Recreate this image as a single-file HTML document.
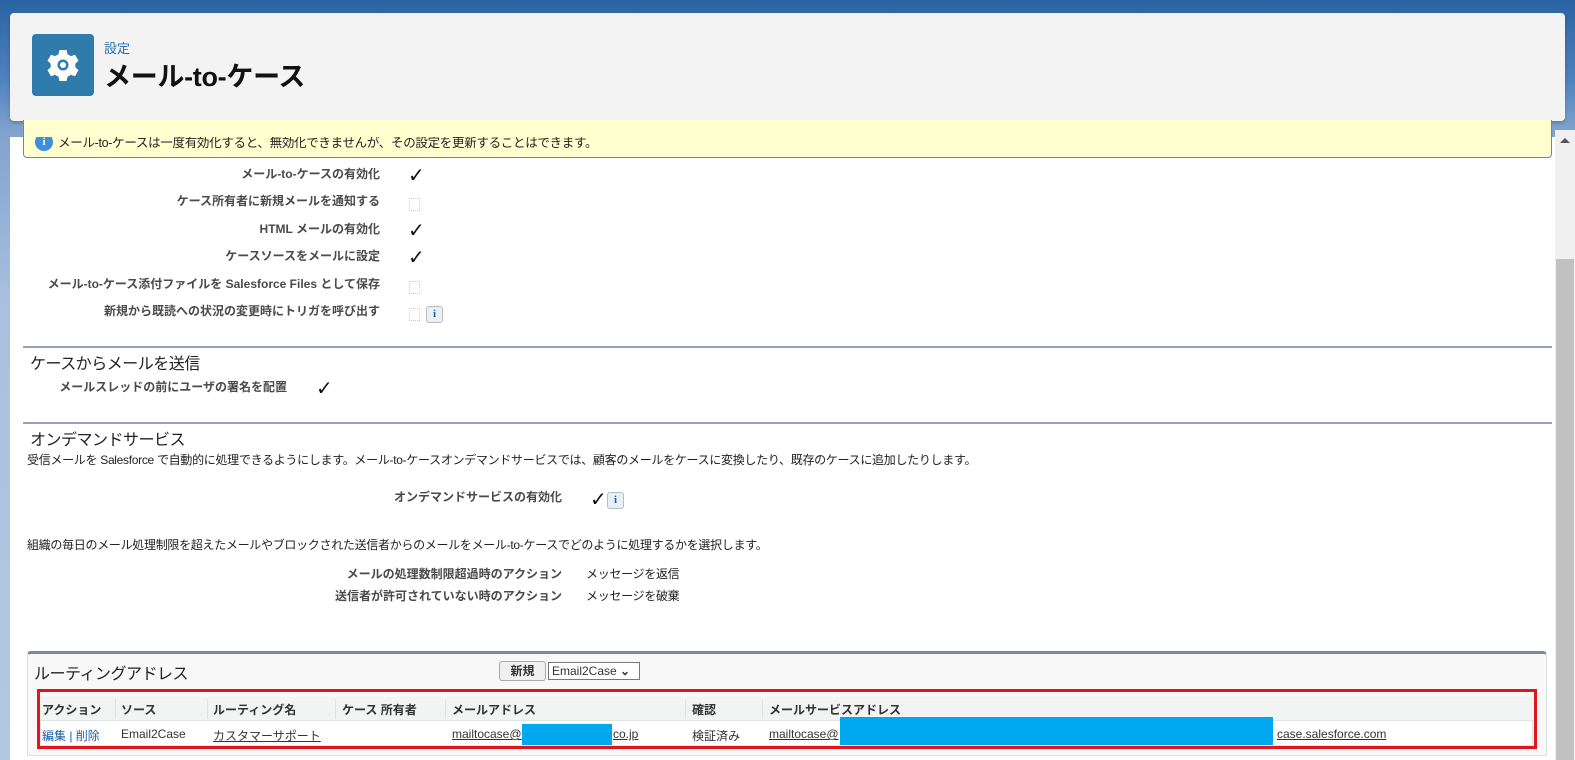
<!DOCTYPE html>
<html><head><meta charset="utf-8"><style>
*{margin:0;padding:0;box-sizing:border-box}
body{width:1575px;height:760px;overflow:hidden;position:relative;font-family:"Liberation Sans","Noto Sans CJK JP",sans-serif;font-size:12px;color:#333;background:linear-gradient(180deg,#2a63a3 0,#4f82be 80px,#7fa2cd 130px,#a9c0de 300px,#b5c8e2 760px)}
.abs{position:absolute}
.hdr{left:10px;top:13px;width:1555px;height:108px;background:#f3f3f3;border-radius:4px;box-shadow:0 2px 3px rgba(0,0,0,.2)}
.icon{left:32px;top:34px;width:62px;height:62px;background:#2f7bac;border-radius:4px}
.panel{left:10px;top:137px;width:1545px;height:623px;background:#fff}
.sb{left:1555px;top:130px;width:20px;height:630px;background:#f0f0f0}
.thumb{left:1556px;top:259px;width:18px;height:501px;background:#c1c1c1}
.info{left:23px;top:120px;width:1529px;height:38px;background:#ffffd0;border:1px solid #3c97d8;border-top:none;border-radius:0 0 4px 4px}
.lbl{font-weight:bold;text-align:right;white-space:nowrap;letter-spacing:0;font-size:12px;color:#4a4a4a}
.cb{width:11px;height:13px;border:1px dotted #ccc}
.chk{font-size:20px;font-weight:bold;color:#111;line-height:1;font-family:"DejaVu Sans",sans-serif}
.ibtn{width:17px;height:17px;border:1px solid #bbb;border-radius:3px;background:#e8f0f8;color:#1f5fb0;font:bold 11px "Liberation Serif",serif;text-align:center;line-height:15px}
.line{left:23px;width:1529px;height:2px;background:#98a2bc}
.h2{font-size:16px;color:#222;letter-spacing:-0.5px;white-space:nowrap}
.txt{white-space:nowrap;letter-spacing:-0.3px;color:#222}
</style></head><body>
<div class="abs hdr"></div>
<div class="abs icon"><svg width="62" height="62" viewBox="0 0 62 62"><g transform="translate(31 31)" fill="#fff"><path d="M-3.5-15h7l1 4.2 3.4 1.9 4.1-1.3 3.5 6-3.2 3v3.4l3.2 3-3.5 6-4.1-1.3-3.4 1.9-1 4.2h-7l-1-4.2-3.4-1.9-4.1 1.3-3.5-6 3.2-3v-3.4l-3.2-3 3.5-6 4.1 1.3 3.4-1.9z"/><circle r="5.5" fill="#2f7bac"/><circle r="3" fill="#fff"/></g></svg></div>
<div class="abs" style="left:104px;top:38px;font-size:13px;color:#2c6fae">設定</div>
<div class="abs" style="left:104px;top:55px;font-size:27px;font-weight:bold;color:#111;letter-spacing:-0.3px">メール-to-ケース</div>
<div class="abs panel"></div>
<div class="abs sb"></div><div class="abs thumb"></div>
<div class="abs" style="left:1560px;top:138px;width:0;height:0;border-left:5px solid transparent;border-right:5px solid transparent;border-bottom:5px solid #555"></div>
<div class="abs info"></div>
<div class="abs" style="left:35px;top:133px;width:18px;height:18px;border-radius:50%;background:#3c8fd8;color:#fff;font:bold 11px serif;text-align:center;line-height:18px;clip-path:inset(4px 0 0 0)">i</div>
<div class="abs txt" style="left:58px;top:132px;font-size:12.5px;clip-path:inset(5px 0 0 0)">メール-to-ケースは一度有効化すると、無効化できませんが、その設定を更新することはできます。</div>

<div class="abs lbl" style="right:1195px;top:165px">メール-to-ケースの有効化</div>
<div class="abs lbl" style="right:1195px;top:192px">ケース所有者に新規メールを通知する</div>
<div class="abs lbl" style="right:1195px;top:220px">HTML メールの有効化</div>
<div class="abs lbl" style="right:1195px;top:247px">ケースソースをメールに設定</div>
<div class="abs lbl" style="right:1195px;top:275px">メール-to-ケース添付ファイルを Salesforce Files として保存</div>
<div class="abs lbl" style="right:1195px;top:302px">新規から既読への状況の変更時にトリガを呼び出す</div>
<div class="abs chk" style="left:408px;top:165px">✓</div>
<div class="abs cb" style="left:409px;top:198px"></div>
<div class="abs chk" style="left:408px;top:220px">✓</div>
<div class="abs chk" style="left:408px;top:247px">✓</div>
<div class="abs cb" style="left:409px;top:281px"></div>
<div class="abs cb" style="left:409px;top:308px"></div>
<div class="abs ibtn" style="left:426px;top:306px">i</div>

<div class="abs line" style="top:346px"></div>
<div class="abs h2" style="left:30px;top:350px">ケースからメールを送信</div>
<div class="abs lbl" style="right:1288px;top:378px">メールスレッドの前にユーザの署名を配置</div>
<div class="abs chk" style="left:316px;top:378px">✓</div>

<div class="abs line" style="top:422px"></div>
<div class="abs h2" style="left:30px;top:426px">オンデマンドサービス</div>
<div class="abs txt" style="left:27px;top:451px">受信メールを Salesforce で自動的に処理できるようにします。メール-to-ケースオンデマンドサービスでは、顧客のメールをケースに変換したり、既存のケースに追加したりします。</div>
<div class="abs lbl" style="right:1013px;top:488px">オンデマンドサービスの有効化</div>
<div class="abs chk" style="left:590px;top:489px">✓</div>
<div class="abs ibtn" style="left:607px;top:492px">i</div>
<div class="abs txt" style="left:27px;top:536px">組織の毎日のメール処理制限を超えたメールやブロックされた送信者からのメールをメール-to-ケースでどのように処理するかを選択します。</div>
<div class="abs lbl" style="right:1013px;top:565px">メールの処理数制限超過時のアクション</div>
<div class="abs lbl" style="right:1013px;top:587px">送信者が許可されていない時のアクション</div>
<div class="abs txt" style="left:586px;top:565px">メッセージを返信</div>
<div class="abs txt" style="left:586px;top:587px">メッセージを破棄</div>

<div class="abs" style="left:27px;top:651px;width:1520px;height:105px;background:#f8f8f8;border-top:3px solid #7d879a;border-left:1px solid #e0e3e5;border-right:1px solid #e0e3e5;border-bottom:1px solid #e0e3e5;border-radius:4px 4px 0 0"></div>
<div class="abs h2" style="left:34px;top:660px">ルーティングアドレス</div>
<div class="abs" style="left:499px;top:661px;width:47px;height:20px;border:1px solid #aaa;border-radius:3px;background:#f0f0f0;font-weight:bold;text-align:center;line-height:18px">新規</div>
<div class="abs" style="left:548px;top:662px;width:92px;height:18px;border:1px solid #777;background:#fff;font-size:12px;line-height:16px;padding-left:3px">Email2Case <span style="font-weight:bold">⌄</span></div>

<div class="abs" style="left:40px;top:697px;width:1493px;height:49px;background:#fff;border:1px solid #e0e3e5"></div>
<div class="abs" style="left:40px;top:697px;width:1493px;height:24px;background:#f2f3f3;border-bottom:1px solid #e0e3e5"></div>
<div class="abs" style="top:701px;left:42px;font-weight:bold">アクション</div>
<div class="abs" style="top:701px;left:121px;font-weight:bold">ソース</div>
<div class="abs" style="top:701px;left:213px;font-weight:bold">ルーティング名</div>
<div class="abs" style="top:701px;left:342px;font-weight:bold">ケース 所有者</div>
<div class="abs" style="top:701px;left:452px;font-weight:bold">メールアドレス</div>
<div class="abs" style="top:701px;left:692px;font-weight:bold">確認</div>
<div class="abs" style="top:701px;left:769px;font-weight:bold">メールサービスアドレス</div>
<div class="abs" style="left:115px;top:699px;width:1px;height:20px;background:#e0e3e5"></div>
<div class="abs" style="left:207px;top:699px;width:1px;height:20px;background:#e0e3e5"></div>
<div class="abs" style="left:335px;top:699px;width:1px;height:20px;background:#e0e3e5"></div>
<div class="abs" style="left:445px;top:699px;width:1px;height:20px;background:#e0e3e5"></div>
<div class="abs" style="left:685px;top:699px;width:1px;height:20px;background:#e0e3e5"></div>
<div class="abs" style="left:762px;top:699px;width:1px;height:20px;background:#e0e3e5"></div>
<div class="abs" style="top:727px;left:42px;color:#1b5fa8">編集 | 削除</div>
<div class="abs" style="top:727px;left:121px">Email2Case</div>
<div class="abs" style="top:727px;left:213px;text-decoration:underline">カスタマーサポート</div>
<div class="abs" style="top:727px;left:452px;text-decoration:underline">mailtocase@</div>
<div class="abs" style="top:727px;left:613px;text-decoration:underline">co.jp</div>
<div class="abs" style="top:727px;left:692px">検証済み</div>
<div class="abs" style="top:727px;left:769px;text-decoration:underline">mailtocase@</div>
<div class="abs" style="top:727px;left:1277px;text-decoration:underline">case.salesforce.com</div>
<div class="abs" style="left:522px;top:724px;width:90px;height:21px;background:#00a8f0"></div>
<div class="abs" style="left:840px;top:717px;width:433px;height:28px;background:#00a8f0"></div>
<div class="abs" style="left:37px;top:689px;width:1500px;height:60px;border:3px solid #e3151c"></div>
</body></html>
